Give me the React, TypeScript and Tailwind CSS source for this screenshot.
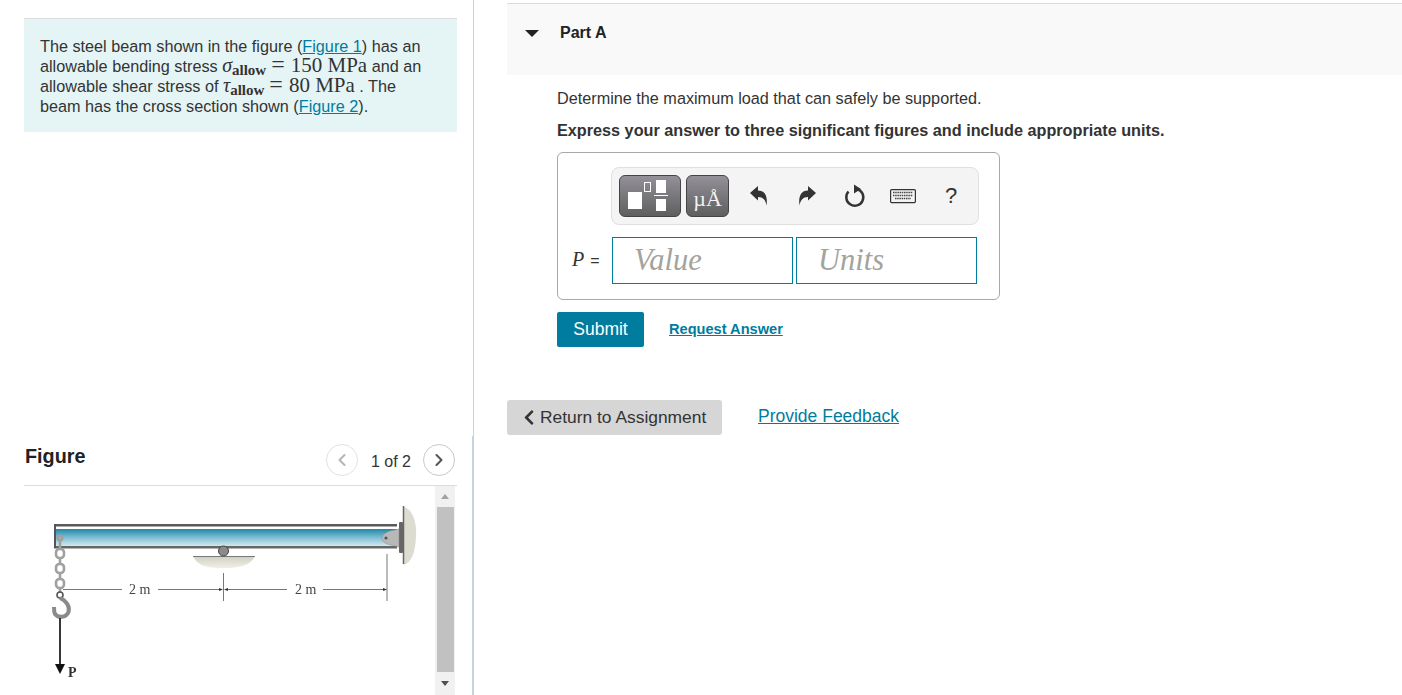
import { ChevronLeft, ChevronRight } from "lucide-react";
import { FaChevronLeft } from "react-icons/fa";

function BeamFigure(): React.ReactElement {
  return (
    <svg viewBox="24 486 411 209" className="w-[411px] h-[209px] shrink-0 blur-[0.4px]">
      <defs>
        <linearGradient id="beam" x1="0" y1="0" x2="0" y2="1">
          <stop offset="0" stopColor="#2288a6" />
          <stop offset="0.5" stopColor="#7dbdd3" />
          <stop offset="1" stopColor="#d2e9f0" />
        </linearGradient>
        <linearGradient id="ground" x1="0" y1="0" x2="0" y2="1">
          <stop offset="0" stopColor="#cfcfbf" />
          <stop offset="1" stopColor="#efefe8" />
        </linearGradient>
      </defs>
      {/* wall */}
      <path d="M404 507 C413 510 417 522 416 538 C415 552 412 562 404 565 Z" fill="#dcdcd0" />
      <line x1="403.5" y1="506" x2="403.5" y2="564" stroke="#666" strokeWidth="1.5" />
      <rect x="399" y="522" width="4" height="31" rx="1" fill="#666" />
      {/* beam */}
      <rect x="54" y="524" width="343" height="24" fill="#fff" />
      <rect x="54" y="529" width="343" height="17" fill="url(#beam)" />
      <rect x="54" y="524" width="343" height="2.5" fill="#5a5a5a" />
      <rect x="54" y="546" width="343" height="2.5" fill="#666" />
      <rect x="54" y="524" width="2" height="24" fill="#555" />
      {/* clevis */}
      <path d="M399 529 L390 531 C384 533 382 536 382 538 C382 542 386 544 391 545 L399 547 Z" fill="#b8b8b8" stroke="#888" strokeWidth="0.5" />
      <circle cx="386" cy="538" r="1.6" fill="#555" />
      {/* roller support */}
      <path d="M193 556 L255 556 C250 566 240 568 222 568 C205 568 197 565 193 556 Z" fill="url(#ground)" />
      <line x1="193" y1="556.5" x2="255" y2="556.5" stroke="#777" strokeWidth="1" />
      <circle cx="223.5" cy="551" r="5" fill="#8a8a8a" stroke="#444" strokeWidth="1" />
      {/* dimensions */}
      <g stroke="#777" strokeWidth="1">
        <line x1="63" y1="589.5" x2="122" y2="589.5" />
        <line x1="158" y1="589.5" x2="220" y2="589.5" />
        <line x1="226" y1="589.5" x2="287" y2="589.5" />
        <line x1="323" y1="589.5" x2="386" y2="589.5" />
        <line x1="223.5" y1="573" x2="223.5" y2="601" />
        <line x1="387" y1="554" x2="387" y2="601" />
      </g>
      <path d="M223 589.5 L219 588 L219 591 Z M224 589.5 L228 588 L228 591 Z M387 589.5 L383 588 L383 591 Z" fill="#333" />
      <text x="129" y="594" fontFamily="'Liberation Serif', serif" fontSize="14" fill="#444">2 m</text>
      <text x="295" y="594" fontFamily="'Liberation Serif', serif" fontSize="14" fill="#444">2 m</text>
      {/* chain */}
      <g fill="none" stroke="#a0a0a0" strokeWidth="2.6">
        <circle cx="60" cy="538" r="2.2" />
        <rect x="56" y="549" width="8" height="9" rx="3.5" />
        <rect x="56" y="564" width="8" height="9" rx="3.5" />
        <rect x="56" y="579" width="8" height="9" rx="3.5" />
        <line x1="60" y1="541" x2="60" y2="549" />
        <line x1="60" y1="558" x2="60" y2="564" />
        <line x1="60" y1="573" x2="60" y2="579" />
        <line x1="60" y1="588" x2="60" y2="593" />
      </g>
      {/* hook */}
      <circle cx="60" cy="595" r="3" fill="none" stroke="#555" strokeWidth="1.6" />
      <path d="M60 598 C67 601 70 607 68.5 612 C66 618 58 618 55 614 C54 612 54 610 54 607" fill="none" stroke="#8a8a8a" strokeWidth="4" />
      {/* load */}
      <line x1="60" y1="618" x2="60" y2="668" stroke="#222" strokeWidth="1.8" />
      <path d="M55 664 L65 664 L60 674 Z" fill="#111" />
      <text x="68" y="677" fontFamily="'Liberation Serif', serif" fontSize="14" fontWeight="700" fill="#333">P</text>
    </svg>
  );
}

function Scrollbar(): React.ReactElement {
  return (
    <div className="w-5 h-full shrink-0 bg-[#f1f1f1] flex flex-col items-center">
      <div className="h-[21px] flex items-center justify-center">
        <div className="w-0 h-0 border-l-4 border-r-4 border-b-[5px] border-l-transparent border-r-transparent border-b-[#a3a3a3]" />
      </div>
      <div className="w-[17px] h-[165px] bg-[#c1c1c1]" />
      <div className="h-[23px] flex items-center justify-center">
        <div className="w-0 h-0 border-l-4 border-r-4 border-t-[5px] border-l-transparent border-r-transparent border-t-[#505050]" />
      </div>
    </div>
  );
}

function UndoIcon({ flip }: { flip?: boolean }): React.ReactElement {
  return (
    <svg viewBox="0 0 18 20" className={flip ? "w-[18px] h-5 -scale-x-100 text-[#333]" : "w-[18px] h-5 text-[#333]"}>
      <path d="M0 7 L8 0 V4.5 C14 4.5 18 9 16.5 19.5 C15.5 14 13 11 8 11 V14.5 Z" fill="currentColor" />
    </svg>
  );
}

function Toolbar(): React.ReactElement {
  return (
    <div className="ml-[53px] w-[368px] h-[58px] bg-[#f4f4f4] border border-[#e0e0e0] rounded-lg flex items-center pl-[7px]">
      <div className="w-[62px] h-[42px] rounded-md border border-[#444] bg-gradient-to-b from-[#949199] to-[#5f5f5f] flex items-start pl-2 pt-[4px]">
        <div className="mt-3 w-[14px] h-[17px] bg-white" />
        <div className="mt-[2px] ml-[2px] w-[7px] h-[10px] border border-white" />
        <div className="ml-[5px] w-[10px] flex flex-col">
          <div className="h-[13px] bg-white" />
          <div className="mt-[2px] -mx-[2px] h-px bg-white" />
          <div className="mt-[3px] h-[12px] bg-white" />
        </div>
      </div>
      <div className="ml-[5px] w-[43px] h-[42px] rounded-md border border-[#444] bg-gradient-to-b from-[#949199] to-[#5f5f5f] flex items-end justify-center pb-[3px] text-[#f2f2f2] text-[22px] leading-[28px] font-['Liberation_Serif',serif]">
        µÅ
      </div>
      <div className="ml-[21px]"><UndoIcon /></div>
      <div className="ml-[30px]"><UndoIcon flip /></div>
      <svg viewBox="0 0 22 24" className="ml-[28px] w-[22px] h-[24px] text-[#333]">
        <path d="M13 5 A8.5 8.5 0 1 1 4.5 7.5" fill="none" stroke="currentColor" strokeWidth="2.5" />
        <path d="M10 0.5 L17 5 L10 9.5 Z" fill="currentColor" />
      </svg>
      <svg viewBox="0 0 26 16" className="ml-[24px] w-[26px] h-[16px]">
        <rect x="0.6" y="1.6" width="24.8" height="13" rx="1" fill="#f4f4f4" stroke="#333" strokeWidth="1.2" />
        <path d="M3 4.5H23M3 7.5H23M5 10.5H21" stroke="#444" strokeWidth="1.6" strokeDasharray="1.5 0.7" />
      </svg>
      <span className="ml-[29px] text-[22px] leading-none text-[#333]">?</span>
    </div>
  );
}

function Stress({ symbol, value }: { symbol: string; value: string }): React.ReactElement {
  return (
    <span className="font-['Liberation_Serif',serif] leading-[0]">
      <i className="text-[20px] leading-[0]">{symbol}</i>
      <span className="text-[15px] font-bold relative top-[3px] leading-[0]">allow</span>
      <span className="ml-[5px] text-[24px] leading-[0]">=</span>
      <span className="ml-[6px] text-[21px] leading-[0]">{value}</span>
    </span>
  );
}

export default function App(): React.ReactElement {
  return (
    <div className="h-[695px] overflow-hidden bg-white flex font-['Liberation_Sans',Arial,sans-serif] text-[16.23px] text-[#333]">
      {/* left column */}
      <aside className="w-[474px] h-full shrink-0 border-r border-[#c3d5e5] flex flex-col">
        <div className="h-[436px] pt-[18px] pl-6 pr-4">
          <div className="h-[114px] border-t border-[#dcdcdc] bg-[#e5f5f6] pl-4 pt-[17px] leading-5">
            The steel beam shown in the figure (<a className="text-[#007c9e] underline">Figure 1</a>) has an
            <br />
            allowable bending stress <Stress symbol="σ" value="150 MPa" /> and an
            <br />
            allowable shear stress of <Stress symbol="τ" value="80 MPa" /> . The
            <br />
            beam has the cross section shown (<a className="text-[#007c9e] underline">Figure 2</a>).
          </div>
        </div>

        <div className="h-[259px] border-r border-[#c3d5e5] pl-6 pr-[15px]">
          <div className="h-[50px] pt-2 flex justify-between border-b border-[#dcdcdc]">
            <h2 className="text-[19.8px] leading-6 font-bold text-[#222] pl-px">Figure</h2>
            <div className="flex items-center h-8 pr-[2px]">
              <button type="button" className="w-8 h-8 rounded-full border border-[#e2e2e2] flex items-center justify-center text-[#b5b5b5]">
                <ChevronLeft className="w-5 h-5" strokeWidth={2.5} />
              </button>
              <span className="ml-[13px] mr-3 text-[16px] leading-5 pt-[3px] text-[#333]">1 of 2</span>
              <button type="button" className="w-8 h-8 rounded-full border border-[#c9c9c9] flex items-center justify-center text-[#555]">
                <ChevronRight className="w-5 h-5" strokeWidth={2.5} />
              </button>
            </div>
          </div>

          <div className="h-[209px] flex">
            <BeamFigure />
            <Scrollbar />
          </div>
        </div>
      </aside>

      {/* right column */}
      <main className="flex-1 pl-[33px] pt-[3px]">
        <div className="h-[72px] border-t border-[#dcdcdc] bg-[#f9f9f9] flex pt-[18px] pl-[18px]">
          <div className="mt-[8px] w-0 h-0 border-l-[7px] border-r-[7px] border-t-[7px] border-l-transparent border-r-transparent border-t-[#222]" />
          <span className="ml-[21px] font-bold text-[16px] text-[#222] leading-[22px]">Part A</span>
        </div>

        <div className="pl-[50px]">
          <p className="mt-[13px] leading-5">Determine the maximum load that can safely be supported.</p>
          <p className="mt-3 leading-5 font-bold">Express your answer to three significant figures and include appropriate units.</p>

          <div className="mt-3 w-[443px] h-[148px] border border-[#a8a8a8] rounded-md pt-[14px]">
            <Toolbar />
            <div className="mt-3 flex items-start">
              <span className="w-[54px] pl-[14px] pt-[12px] leading-6 text-[#333] text-[16px] whitespace-nowrap">
                <i className="text-[20px] font-['Liberation_Serif',serif] leading-[0]">P</i>
                <span className="ml-[6px] text-[16px] leading-[0]">=</span>
              </span>
              <div className="w-[181px] h-[47px] border border-[#007c9e] pl-[21px] flex items-center text-[30.5px] italic text-[#a3a39d] font-['Liberation_Serif',serif]">Value</div>
              <div className="ml-[3px] w-[181px] h-[47px] border border-[#007c9e] pl-[21px] flex items-center text-[30.5px] italic text-[#a3a39d] font-['Liberation_Serif',serif]">Units</div>
            </div>
          </div>

          <div className="mt-3 flex items-center">
            <button type="button" className="w-[87px] h-[35px] bg-[#007c9e] text-white text-[17.5px] rounded-[2px]">Submit</button>
            <a className="ml-[25px] text-[#007c9e] underline font-bold text-[14.6px]">Request Answer</a>
          </div>
        </div>

        <div className="mt-[53px] flex items-start">
          <div className="w-[215px] h-[35px] bg-[#d6d6d6] rounded-[3px] flex items-center pl-[15px] pb-px text-[17.4px] text-[#333]">
            <FaChevronLeft className="w-[14px] h-[17px] text-[#333]" />
            <span className="ml-[4px]">Return to Assignment</span>
          </div>
          <a className="ml-9 mt-[4px] text-[#007c9e] underline text-[17.5px] leading-6">Provide Feedback</a>
        </div>
      </main>
    </div>
  );
}
